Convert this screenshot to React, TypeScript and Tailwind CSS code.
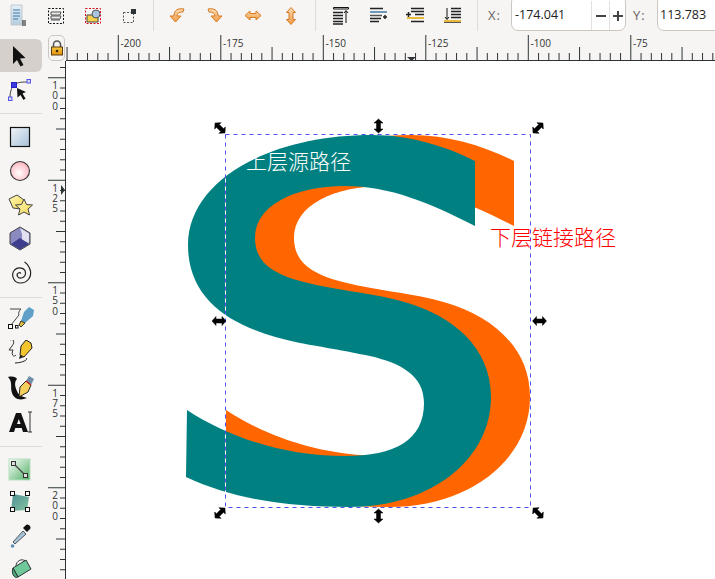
import type { ReactNode } from "react";

const CJK = "font-['Noto_Sans_CJK_SC',sans-serif]";

function Ico({ children }: { children: ReactNode }) {
  return (
    <svg width="28" height="28" viewBox="0 0 28 28" fill="none" className="block">
      {children}
    </svg>
  );
}

function Defs() {
  return (
    <svg width="0" height="0" className="absolute">
      <defs>
        <linearGradient id="gRect" x1="0" y1="0" x2="1" y2="1">
          <stop offset="0" stopColor="#f0f4f8" />
          <stop offset="1" stopColor="#a6c0d8" />
        </linearGradient>
        <radialGradient id="gPink" cx="0.45" cy="0.6" r="0.6">
          <stop offset="0" stopColor="#ffffff" />
          <stop offset="1" stopColor="#fbb4bf" />
        </radialGradient>
        <linearGradient id="gYellow" x1="0" y1="0" x2="1" y2="1">
          <stop offset="0" stopColor="#fff8c0" />
          <stop offset="1" stopColor="#f2d84a" />
        </linearGradient>
        <linearGradient id="gMesh" x1="0" y1="0" x2="1" y2="1">
          <stop offset="0" stopColor="#4e8f98" />
          <stop offset="1" stopColor="#84c49c" />
        </linearGradient>
        <linearGradient id="gGrad" x1="0" y1="0" x2="1" y2="1">
          <stop offset="0" stopColor="#ffffff" />
          <stop offset="1" stopColor="#4cae62" />
        </linearGradient>
        <linearGradient id="gDoc" x1="0" y1="0" x2="0" y2="1">
          <stop offset="0" stopColor="#e6eff6" />
          <stop offset="1" stopColor="#b4cde0" />
        </linearGradient>
        <linearGradient id="gOrange" x1="0" y1="0" x2="0" y2="1">
          <stop offset="0" stopColor="#fbdcb4" />
          <stop offset="1" stopColor="#ee9a45" />
        </linearGradient>
        <linearGradient id="gLock" x1="0" y1="0" x2="0" y2="1">
          <stop offset="0" stopColor="#f8c840" />
          <stop offset="1" stopColor="#e09010" />
        </linearGradient>
      </defs>
    </svg>
  );
}

const topIcons: ReactNode[] = [
  <>
    <path d="M6 3h11v20H6z" fill="url(#gDoc)" stroke="#c4c8cc" />
    <path d="M8 8h7M8 11h7M8 14h7M8 17h5" stroke="#3d78a8" />
    <path d="M17 19h4M17 23h4M18 20v2M20 20v2" stroke="#111" />
  </>,
  <>
    <rect x="6.500" y="6.500" width="15" height="15" stroke="#111" strokeDasharray="2 1.500" />
    <path d="M9 10h10l-1 3H9zM9 14h10l-1 3H9zM9 18h9" stroke="#555" fill="#eee" />
  </>,
  <>
    <rect x="6.500" y="6.500" width="15" height="15" stroke="#d8101c" strokeDasharray="2 1.500" />
    <path d="M8 13h6l2 2h3v5H8z" fill="#f7d04a" stroke="#444" />
    <circle cx="17" cy="12" r="4" fill="#a9c4dc" stroke="#555" />
  </>,
  <>
    <rect x="7.500" y="10.500" width="10" height="10" stroke="#555" strokeDasharray="2 1.500" />
    <rect x="15" y="7" width="5" height="5" fill="#2e3436" />
  </>,
  <path d="M21 7c-6-1-10 1-10 7H7l5.500 6 5.500-6h-4c0-3 3-4 6-4z" fill="url(#gOrange)" stroke="#d8791c" strokeLinejoin="round" />,
  <path d="M7 7c6-1 10 1 10 7h4l-5.500 6-5.500-6h4c0-3-3-4-6-4z" fill="url(#gOrange)" stroke="#d8791c" strokeLinejoin="round" />,
  <path d="M6 13.500l5-4.500v2.500h6V9l5 4.500-5 4.500v-2.500h-6V18z" fill="url(#gOrange)" stroke="#d8791c" strokeLinejoin="round" />,
  <path d="M14 5.500l4.500 5H16v7h2.500l-4.500 5-4.500-5H12v-7H9.500z" fill="url(#gOrange)" stroke="#d8791c" strokeLinejoin="round" />,
  <>
    <path d="M6.500 5.500h15v1.500h-15z" stroke="#111" />
    <path d="M6 10.500h10M6 13.500h10M6 16.500h10M6 19.500h10M6 22h10" stroke="#222" strokeWidth="1.500" />
    <path d="M19 21V9M17 11l2-2.500 2 2.500" stroke="#111" />
  </>,
  <>
    <path d="M6 6.500h13M6 19.500h9" stroke="#222" strokeWidth="1.500" />
    <path d="M6 10h17" stroke="#3d78a8" strokeWidth="1.500" />
    <path d="M6 13.500h12" stroke="#555" strokeWidth="1.500" />
    <path d="M6 16.500h11M19 15h4M21 13v4" stroke="#222" strokeWidth="1.500" />
  </>,
  <>
    <path d="M10 6.500h13M10 9.500h13M10 19.500h13" stroke="#222" strokeWidth="1.500" />
    <path d="M6 16h17" stroke="#e8b93a" strokeWidth="2" />
    <path d="M14 12.500h9M5 12.500h5M7.500 10v5" stroke="#222" strokeWidth="1.500" />
  </>,
  <>
    <path d="M13 6.500h10M13 9.500h10M13 12.500h10M13 15.500h10" stroke="#222" strokeWidth="1.500" />
    <path d="M9 6v11M7 15l2 2.500 2-2.500" stroke="#111" />
    <path d="M6 20.500h17" stroke="#555" />
    <path d="M6 19h17" stroke="#e8b93a" strokeWidth="2" />
  </>,
];

const tools: { cell: string; icon: ReactNode }[] = [
  {
    cell: "h-[33px] bg-[#d5d0cc] rounded-r-[6px]",
    icon: <path d="M6 4v18l4-4 3.500 6.500 3-1.500-3.500-6.500 5.500-.500z" fill="#111" />,
  },
  {
    cell: "h-[36px] mt-[2px]",
    icon: (
      <>
        <path d="M7 7C10 4 16 4 21 4M6 8c-2 3-3 7-3 11" stroke="#444" />
        <rect x="4.500" y="4.500" width="5" height="5" fill="#3a3ae0" stroke="#2222c0" />
        <rect x="20" y="1.500" width="3.500" height="3.500" fill="#d8d8ff" stroke="#5555e8" />
        <rect x="1.500" y="19" width="3.500" height="3.500" fill="#d8d8ff" stroke="#5555e8" />
        <path d="M10 10l9 4-3.500 1.500 3 5-2 1.500-3-5-3 2.500z" fill="#111" />
      </>
    ),
  },
];

const shapeTools: ReactNode[] = [
  <rect x="3.500" y="4.500" width="19" height="19" fill="url(#gRect)" stroke="#111" strokeWidth="1.200" />,
  <circle cx="13" cy="14" r="9.500" fill="url(#gPink)" stroke="#333" strokeWidth="1.100" />,
  <>
    <path d="M2 8l8-4 7 5-3 9-8-1z" fill="url(#gYellow)" stroke="#444" />
    <path d="M17 8l2.500 5.500 6 .500-4.500 4 1.500 6-5.500-3-5.500 3 1.500-6-4.500-4 6-.500z" fill="url(#gYellow)" stroke="#444" />
  </>,
  <>
    <path d="M13 2l10 6v11l-10 6-10-6V8z" fill="#8a8ac0" stroke="#444" />
    <path d="M13 3l9 5.500V18l-7-3V9z" fill="#e0e0f0" />
    <path d="M4 19l9-6 9 6-9 5.500z" fill="#3e3e8c" />
  </>,
  <path d="M14 14.500c-1.500-2-5 0-3.500 3 2 3 8 1.500 8-3.500 0-5-7-7-11-3-4 5-1 13 6 13 7 0 11-6 10-12-1-4-3-7-6-9" stroke="#222" strokeWidth="1.200" />,
];

const drawTools: ReactNode[] = [
  <>
    <path d="M3 3h11c-2 2-3 4-2 6L4 19" stroke="#444" />
    <path d="M14 15l3-9 5-5 5 3-1 6-8 7z" fill="#5f9fc8" />
    <path d="M14 15l4 2-4 4-2-2z" fill="#e8c040" stroke="#333" />
    <rect x="1.500" y="18.500" width="4" height="4" fill="#fff" stroke="#111" />
    <rect x="8.500" y="19.500" width="2.500" height="2.500" fill="#fff" stroke="#111" />
  </>,
  <g transform="translate(0 -3)">
    <path d="M3 3c4-2 5 3 2 6l-3 4h4c-2 4 0 8 3 5" stroke="#333" />
    <path d="M14 9l5-6 5 3 1 5-8 9-4-2z" fill="#f4c62e" stroke="#222" />
    <path d="M13 18l4 2-5 2z" fill="#222" />
    <path d="M8 26c6 0 14-3 11-5" stroke="#222" />
  </g>,
  <>
    <path d="M1 3c5-1 8 0 9 2-3 3-2 8 0 12 1 4 6 6 10 7-7 3-13 1-15-5C3 13 6 8 1 3z" fill="#111" />
    <path d="M12 23l1-10 6-6 5 4-3 7z" fill="#f4cf5c" stroke="#222" />
    <path d="M19 7l3-5 5 3-3 6z" fill="#6f8fa8" />
    <path d="M19 7l5 4" stroke="#c82020" strokeWidth="1.500" />
  </>,
  <>
    <path d="M9 5h5l7 19h-5l-1.300-4H8.300L7 24H2z" fill="#111" />
    <path d="M10 16h3.600l-1.800-5z" fill="#f5f4f2" />
    <path d="M21 4h4M21 24h4M23 4v20" stroke="#333" />
  </>,
];

const paintTools: ReactNode[] = [
  <>
    <rect x="2" y="3" width="21" height="21" fill="url(#gGrad)" stroke="#b8e0c0" />
    <path d="M7 8l11 11" stroke="#444" strokeWidth="1.300" />
    <rect x="4.500" y="5.500" width="4" height="4" fill="#ddd" stroke="#333" />
    <rect x="16.500" y="17.500" width="4" height="4" fill="#ddd" stroke="#333" />
  </>,
  <>
    <path d="M6 5l16 3-2 13-16 1z" fill="url(#gMesh)" />
    <rect x="3.500" y="2.500" width="4" height="4" fill="#fff" stroke="#111" />
    <rect x="18.500" y="2.500" width="4" height="4" fill="#fff" stroke="#111" />
    <rect x="3.500" y="18.500" width="4" height="4" fill="#fff" stroke="#111" />
    <rect x="18.500" y="18.500" width="4" height="4" fill="#fff" stroke="#111" />
  </>,
  <>
    <path d="M19 3c2-2 6 2 4 4l-3 3-4-4z" fill="#111" />
    <path d="M16 9l3 3-11 10-2-2z" fill="#a8c4d8" stroke="#2e3436" strokeWidth="0.800" />
    <circle cx="5.500" cy="24" r="1.800" fill="#5e8fb0" />
  </>,
  <>
    <path d="M6 13l13-8 5 9-13 8z" fill="#6fc89a" stroke="#2e3436" />
    <path d="M6 13c-2 5 1 11 5 9z" fill="#4aa878" stroke="#2e3436" />
    <path d="M9 11c0-5 6-8 9-5" stroke="#2e3436" />
  </>,
];

const ticks = Array.from({ length: 66 }, (_, i) => i);
const xLabels = ["-200", "-175", "-150", "-125", "-100", "-75"];
const yLabels = ["100", "125", "150", "175", "200"];

function TopRuler() {
  return (
    <svg width="650" height="30" className="block">
      {ticks.map((i) => {
        const x = 1.05 + i * 10.25;
        const h = i % 10 === 5 ? 25 : i % 10 === 0 ? 13 : 7;
        return <path key={i} d={`M${x} 29V${29 - h}`} stroke="#2e3436" />;
      })}
      <path d="M0 29.500H650" stroke="#2e3436" />
      {xLabels.map((t, i) => (
        <text key={t} x={54.5 + i * 102.5} y="16" fontSize="10" fill="#333" fontFamily="Open Sans, sans-serif">
          {t}
        </text>
      ))}
      <path d="M341 26h9l-4.500 4z" fill="#2e3436" />
    </svg>
  );
}

function LeftRuler() {
  return (
    <svg width="18" height="518" className="block shrink-0">
      {Array.from({ length: 51 }, (_, i) => i).map((i) => {
        const y = 6.5 + i * 10.25;
        const w = i % 10 === 1 ? 17 : i % 10 === 6 ? 9 : 5;
        return <path key={i} d={`M${17 - w} ${y}H17`} stroke="#2e3436" />;
      })}
      <path d="M17.500 0V518" stroke="#2e3436" />
      {yLabels.map((t, i) => (
        <text key={t} fontSize="10" textAnchor="middle" fill="#333" fontFamily="Open Sans, sans-serif">
          {t.split("").map((c, j) => (
            <tspan key={j} x="7" y={28 + i * 102.5 + j * 10.4}>
              {c}
            </tspan>
          ))}
        </text>
      ))}
      <path d="M13 124l4 5-4 5z" fill="#2e3436" />
    </svg>
  );
}

const teal =
  "M409 100C379 85 344 74 306 74C204 74 122 119 122 184C122 244 174 270 234 282C250 285 280 290 304 295C334 302 358 314 358 342C358 379 329 395 279 395C214 395 159 374 121 349L120 416C169 439 224 446 284 446C364 446 425 399 425 336C425 285 385 255 342 242C310 232 265 229 234 220C205 212 189 200 189 177C189 144 229 125 279 125C324 125 364 142 409 165Z";

function Handle({ x, y, rot }: { x: number; y: number; rot: number }) {
  return (
    <path
      transform={`translate(${x} ${y}) rotate(${rot})`}
      d="M-7 0L-3 -4.500V-2H3V-4.500L7 0L3 4.500V2H-3V4.500Z"
      fill="#000"
      stroke="#000"
      strokeWidth="0.500"
    />
  );
}

function Drawing() {
  return (
    <svg width="649" height="518" className="block">
      <path d={teal} fill="#ff6600" transform="translate(39 0)" />
      <path d={teal} fill="#008080" />
      <rect x="159.500" y="73.500" width="305" height="373" fill="none" stroke="#fff" />
      <rect x="159.500" y="73.500" width="305" height="373" fill="none" stroke="#5050ee" strokeDasharray="4 4" />
      <Handle x={154} y={67} rot={45} />
      <Handle x={472} y={67} rot={-45} />
      <Handle x={154} y={452} rot={-45} />
      <Handle x={472} y={452} rot={45} />
      <Handle x={312.500} y={65} rot={90} />
      <Handle x={312.500} y={455} rot={90} />
      <Handle x={153} y={260} rot={0} />
      <Handle x={473.500} y={260} rot={0} />
    </svg>
  );
}

export default function App() {
  return (
    <div className="w-[715px] h-[579px] overflow-hidden flex flex-col bg-[#f6f5f4] font-['Open_Sans',sans-serif]">
      <Defs />
      <div className="h-[31px] flex shrink-0 overflow-hidden items-center">
        <div className="w-[154px] shrink-0 h-full flex items-center border-r border-[#dedbd8]">
          {topIcons.slice(0, 4).map((ic, i) => (
            <div key={i} className="w-[37px] flex justify-center">
              <Ico>{ic}</Ico>
            </div>
          ))}
        </div>
        <div className="w-[162px] shrink-0 h-full flex items-center pl-[4px] border-r border-[#dedbd8]">
          {topIcons.slice(4, 8).map((ic, i) => (
            <div key={i} className="w-[38px] flex justify-center">
              <Ico>{ic}</Ico>
            </div>
          ))}
        </div>
        <div className="w-[162px] shrink-0 h-full flex items-center pl-[6px] border-r border-[#dedbd8]">
          {topIcons.slice(8, 12).map((ic, i) => (
            <div key={i} className="w-[37px] flex justify-center">
              <Ico>{ic}</Ico>
            </div>
          ))}
        </div>
        <span className="ml-[10px] w-[23px] shrink-0 text-[13px] tracking-[1px] text-[#666]">X:</span>
        <div className="self-end h-[36px] w-[115px] flex items-center bg-white border border-[#cdc7c2] rounded-[7px] overflow-hidden pt-[5px] text-[12.5px] text-[#222] shrink-0">
          <span className="flex-1 pl-[3px]">-174.041</span>
          <span className="w-[18px] h-full border-l border-[#e4e1de] flex items-center justify-center">
            <svg width="12" height="12" viewBox="0 0 12 12">
              <path d="M1 6h10" stroke="#444" strokeWidth="2" />
            </svg>
          </span>
          <span className="w-[16px] h-full border-l border-[#e4e1de] flex items-center justify-center">
            <svg width="12" height="12" viewBox="0 0 12 12">
              <path d="M1 6h10M6 1v10" stroke="#444" strokeWidth="2" />
            </svg>
          </span>
        </div>
        <span className="ml-[7px] w-[24px] shrink-0 text-[13px] tracking-[1px] text-[#666]">Y:</span>
        <div className="self-end h-[36px] w-[80px] shrink-0 flex items-center bg-white border border-[#cdc7c2] rounded-[7px] overflow-hidden pt-[5px] text-[12.5px] text-[#222]">
          <span className="flex-1 pl-[2px]">113.783</span>
        </div>
      </div>

      <div className="flex-1 flex min-h-0">
        <div className="w-[48px] shrink-0 flex flex-col">
          <div className="h-[8px] shrink-0" />
          {tools.map((t, i) => (
            <div key={i} className={`w-[42px] shrink-0 flex items-center justify-center ${t.cell}`}>
              <Ico>{t.icon}</Ico>
            </div>
          ))}
          <div className="w-[42px] h-px bg-[#dedbd8] mt-[3px] mb-[6px] shrink-0" />
          {shapeTools.map((ic, i) => (
            <div key={i} className="w-[42px] h-[34px] shrink-0 flex items-center justify-center">
              <Ico>{ic}</Ico>
            </div>
          ))}
          <div className="w-[42px] h-px bg-[#dedbd8] mt-[7px] mb-[5px] shrink-0" />
          {drawTools.map((ic, i) => (
            <div key={i} className="w-[42px] h-[34px] shrink-0 flex items-center justify-center">
              <Ico>{ic}</Ico>
            </div>
          ))}
          <div className="w-[42px] h-px bg-[#dedbd8] mt-[7px] mb-[6px] shrink-0" />
          {paintTools.map((ic, i) => (
            <div key={i} className="w-[42px] h-[33px] shrink-0 flex items-center justify-center">
              <Ico>{ic}</Ico>
            </div>
          ))}
        </div>

        <div className="flex-1 flex flex-col min-w-0">
          <div className="h-[30px] flex shrink-0">
            <div className="w-[18px] shrink-0 pt-[4px]">
              <div className="w-[17px] h-[26px] bg-[#f6f5f4] border border-[#cdc7c2] rounded-[5px] flex items-center justify-center">
                <svg width="14" height="16" viewBox="0 0 14 16">
                  <path d="M3.500 7V4.500a3.500 3.500 0 0 1 7 0V7" stroke="#555" strokeWidth="1.600" fill="none" />
                  <rect x="1.500" y="7" width="11" height="8" fill="url(#gLock)" stroke="#5c3c10" />
                  <circle cx="7" cy="11" r="1.300" fill="#3c2a10" />
                </svg>
              </div>
            </div>
            <TopRuler />
          </div>
          <div className="flex-1 flex min-h-0">
            <LeftRuler />
            <div className="flex-1 bg-white relative overflow-hidden">
              <Drawing />
              <span className={`absolute left-[180px] top-[84px] text-[21px] leading-[30px] font-light text-white whitespace-nowrap ${CJK}`}>上层源路径</span>
              <span className={`absolute left-[424px] top-[160px] text-[21px] leading-[30px] font-light text-[#ff0000] whitespace-nowrap ${CJK}`}>下层链接路径</span>
            </div>
          </div>
        </div>
      </div>
    </div>
  );
}
